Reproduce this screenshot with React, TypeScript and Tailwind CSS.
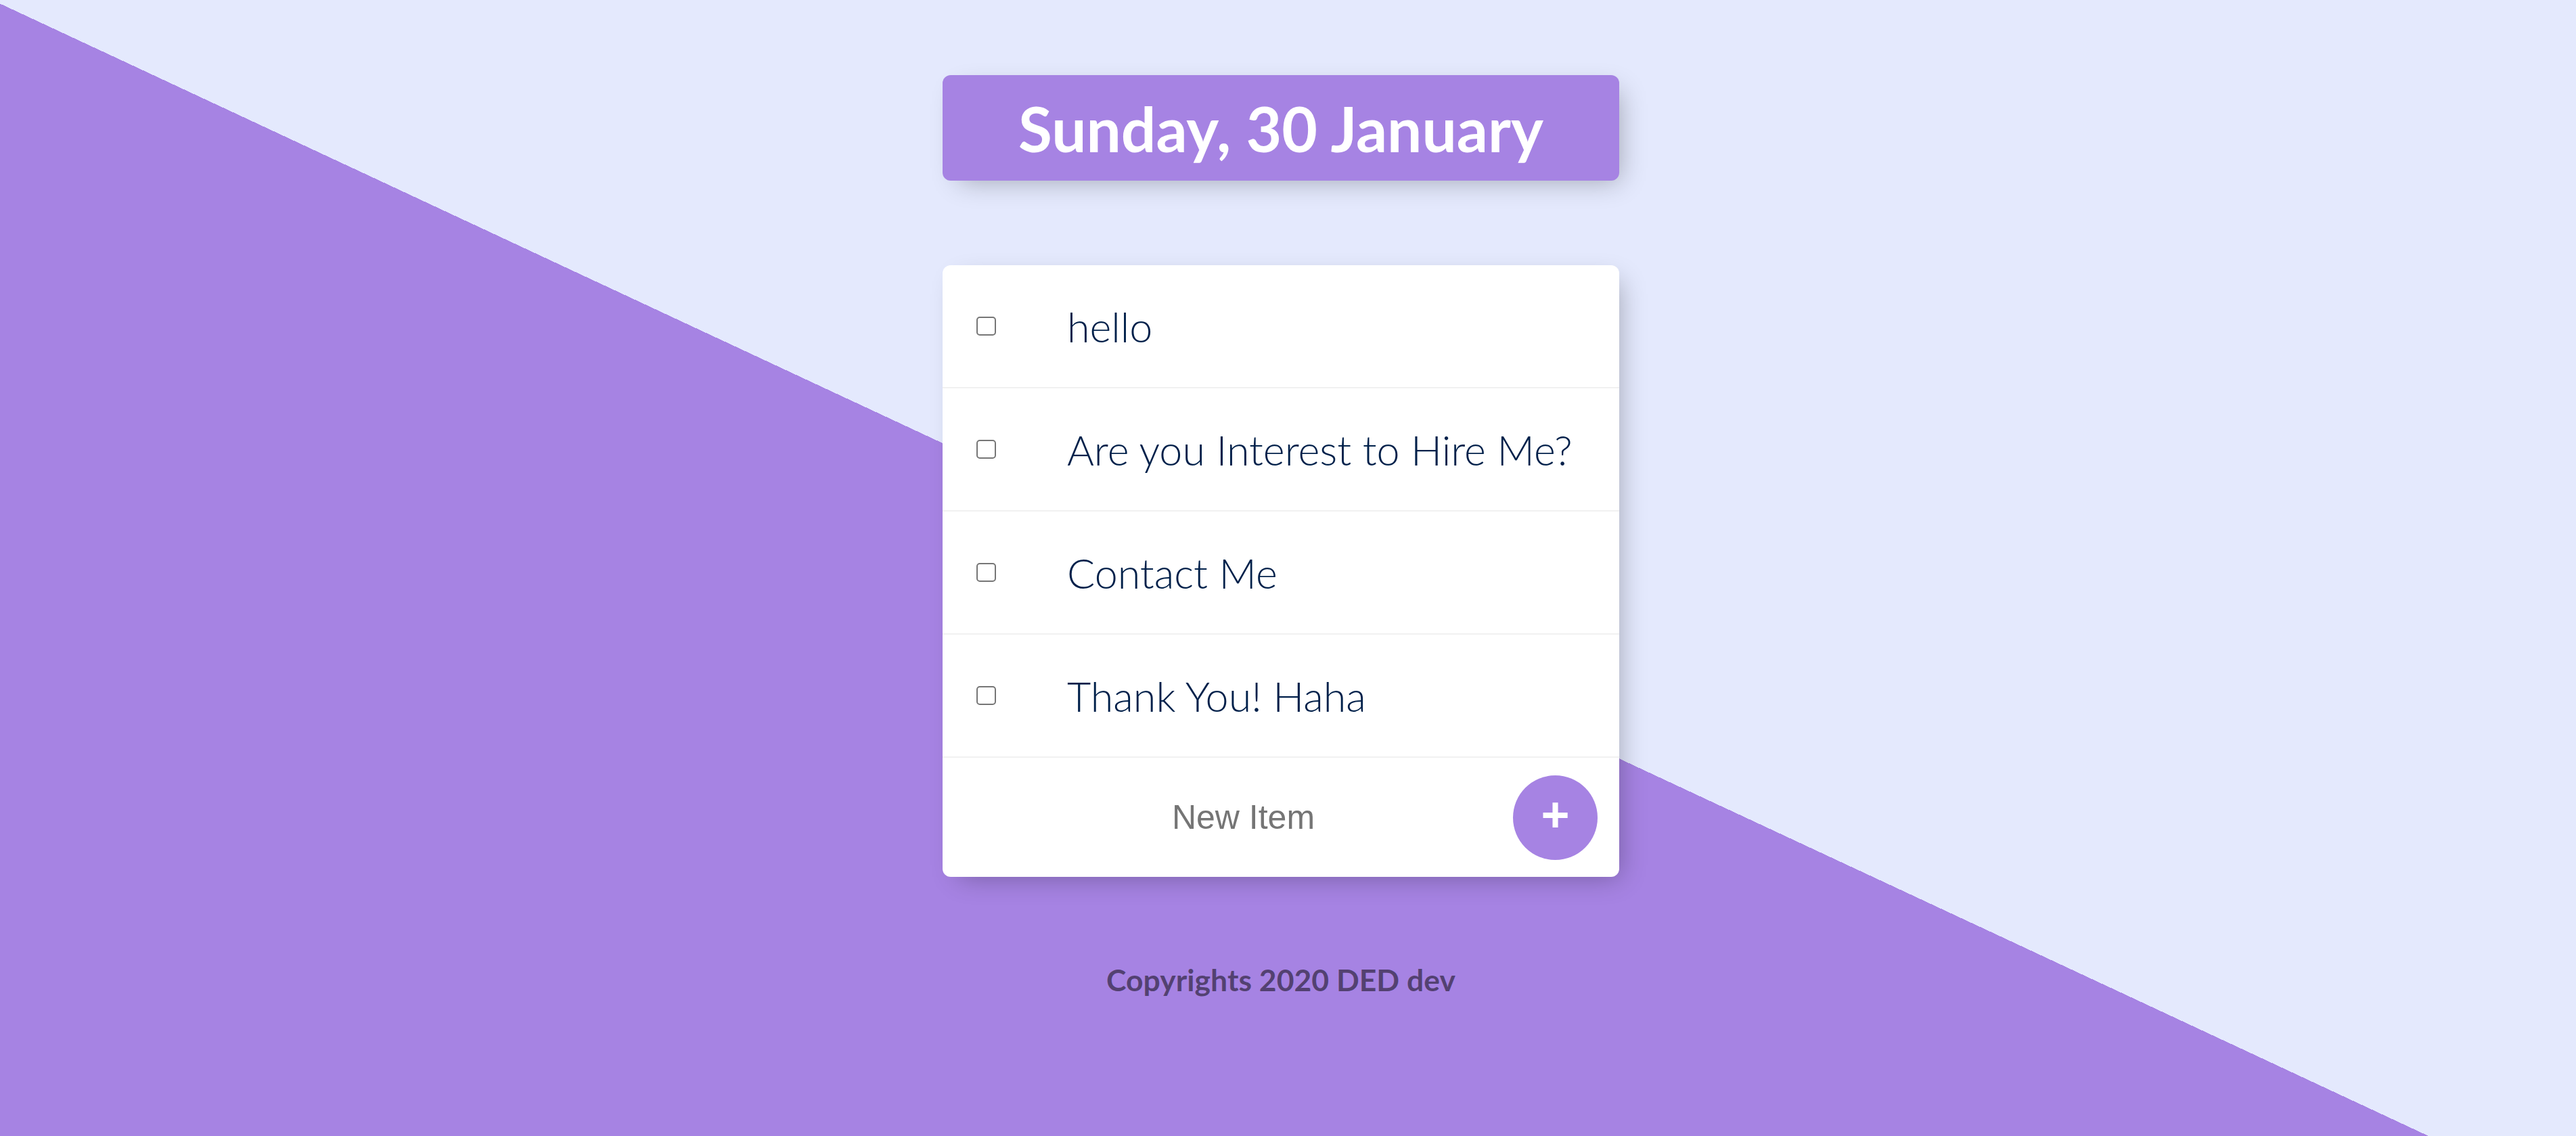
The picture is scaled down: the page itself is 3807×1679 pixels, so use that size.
import React from "react";

const items = ["hello", "Are you Interest to Hire Me?", "Contact Me", "Thank You! Haha"];

export default function App() {
  return (
    <div className="w-full h-[1679px] overflow-hidden bg-[#E4E9FD] bg-[linear-gradient(25deg,#A683E3_50%,#E4E9FD_50%)] bg-[length:100%_1786px] bg-no-repeat bg-top-left flex flex-col items-center pr-[21px]">
      <div className="mt-[111px] w-[1000px] h-[156px] rounded-[12px] bg-[#A683E3] shadow-[12px_12px_37px_-12px_rgba(0,0,0,0.3)] flex items-center justify-center">
        <h1 className="text-white font-bold text-[91px] leading-none font-['Lato','Noto_Sans',sans-serif]">
          Sunday, 30 January
        </h1>
      </div>

      <div className="mt-[125px] w-[1000px] rounded-[12px] bg-white shadow-[12px_12px_37px_-12px_rgba(0,0,0,0.3)] flex flex-col">
        {items.map((t) => (
          <div key={t} className="h-[182px] flex items-center border-b-2 border-[#F1F1F1]">
            <input
              type="checkbox"
              className="appearance-none ml-[50px] w-[29px] h-[28px] border-2 border-[#767676] rounded-[5px] bg-white shrink-0"
            />
            <p className="ml-[105px] text-[#00204a] font-light text-[61px] leading-none font-['Lato','Open_Sans',sans-serif]">
              {t}
            </p>
          </div>
        ))}
        <div className="h-[176px] flex items-center">
          <input
            type="text"
            placeholder="New Item"
            className="ml-[56px] w-[777px] h-[150px] text-center bg-transparent outline-none text-[50px] font-['Liberation_Sans',Arial,sans-serif] placeholder:text-[#757575]"
          />
          <button className="ml-[10px] w-[125px] h-[125px] rounded-full bg-[#A683E3] text-white text-[72px] font-bold leading-none flex items-center justify-center pb-[8px] font-['Liberation_Sans',Arial,sans-serif]">
            +
          </button>
        </div>
      </div>

      <footer className="mt-[130px] h-[44px] text-[44.5px] leading-none font-bold text-black/50 font-['Lato','Noto_Sans',sans-serif]">
        Copyrights 2020 DED dev
      </footer>
    </div>
  );
}
